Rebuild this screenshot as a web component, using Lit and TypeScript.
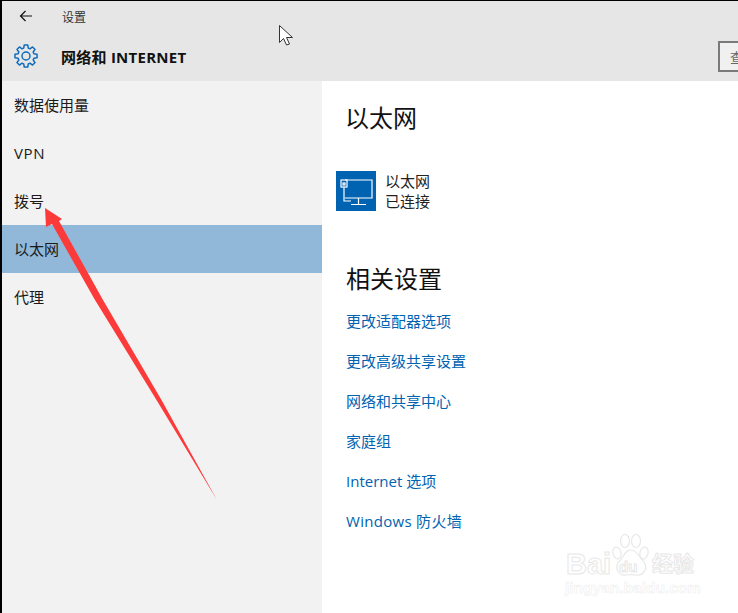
import { LitElement, html, css, svg } from "lit";
import { customElement } from "lit/decorators.js";

function gearPath(cx: number, cy: number, rOut: number, rIn: number, teeth: number) {
  const pts: string[] = [];
  const step = (Math.PI * 2) / teeth;
  for (let i = 0; i < teeth; i++) {
    const a = i * step - Math.PI / 2;
    const corners: Array<[number, number]> = [
      [rIn, a - step * 0.36],
      [rOut, a - step * 0.2],
      [rOut, a + step * 0.2],
      [rIn, a + step * 0.36],
    ];
    for (const [r, t] of corners) {
      pts.push(`${(cx + r * Math.cos(t)).toFixed(2)} ${(cy + r * Math.sin(t)).toFixed(2)}`);
    }
  }
  return "M" + pts.join("L") + "Z";
}

@customElement("app-root")
export class AppRoot extends LitElement {
  static styles = css`
    :host { display: block; width: 738px; height: 613px; position: relative; overflow: hidden; background: #fff; font-family: "Open Sans", "Noto Sans CJK SC", sans-serif; color: #111; }
    .frame { width: 738px; height: 613px; box-sizing: border-box; border-top: 1px solid #000; border-left: 2px solid #000; display: flex; flex-direction: column; }
    .header { height: 80px; background: #e6e6e6; flex: none; display: flex; flex-direction: column; position: relative; }
    .top { height: 31px; display: flex; align-items: center; padding-left: 16px; gap: 28px; }
    .top span { font-size: 12px; color: #333; padding-top: 1px; }
    .title { display: flex; align-items: center; padding-left: 12px; gap: 23px; height: 50px; }
    .title span { font-size: 15px; font-weight: 700; color: #111; letter-spacing: 0.25px; }
    .search { position: absolute; left: 716px; top: 40px; width: 30px; height: 31px; box-sizing: border-box; border: 2px solid #7a7a7a; background: #f0f0f0; font-size: 13px; color: #666; padding: 4px 0 0 10px; line-height: 20px; }
    .body { display: flex; flex: 1; min-height: 0; }
    .side { width: 320px; background: #f2f2f2; flex: none; }
    .side div { height: 48px; box-sizing: border-box; display: flex; align-items: center; padding: 0 0 2px 12px; font-size: 15px; color: #1a1a1a; }
    .side div.latin { padding-bottom: 0; letter-spacing: 0.6px; }
    .side div.sel { background: #91b8d8; }
    .main { flex: 1; padding-left: 24px; }
    h1, h2 { margin: 0; font-weight: 400; font-size: 24px; line-height: 32px; color: #111; }
    h1 { margin: 21px 0 0 -1px; }
    .conn { display: flex; gap: 9px; margin: 37px 0 0 -10px; align-items: center; }
    .tile { width: 40px; height: 40px; background: #0063b1; flex: none; display: block; }
    .conn div { font-size: 15px; line-height: 20px; color: #222; }
    h2 { margin-top: 52px; }
    .links { margin-top: 5px; display: flex; flex-direction: column; }
    .links a { height: 40px; display: flex; align-items: center; font-size: 15px; color: #0063b1; text-decoration: none; }
    .links a.wide { letter-spacing: 0.3px; }
    .overlay { position: absolute; left: 0; top: 0; pointer-events: none; }
    .mark { position: absolute; left: 565px; top: 533px; width: 173px; height: 62px; pointer-events: none; }
    .mark span { position: absolute; white-space: nowrap; line-height: 1; color: transparent; -webkit-text-stroke: 1px #e8e8e8; }
    .bai { left: 1px; top: 17px; font: 700 29px "Liberation Sans", sans-serif; }
    .du { left: 54px; top: 26px; font: 700 15px "Liberation Sans", sans-serif; }
    .jing { left: 87px; top: 20px; font-size: 21px; font-weight: 700; }
    .mark span.url { left: 0; top: 46px; font: 700 15.5px "Liberation Sans", sans-serif; -webkit-text-stroke: .6px #efefef; }
    .mark svg { position: absolute; left: 46px; top: 0; }
  `;

  render() {
    const nav = ["数据使用量", "VPN", "拨号", "以太网", "代理"];
    const links = ["更改适配器选项", "更改高级共享设置", "网络和共享中心", "家庭组", "Internet 选项", "Windows 防火墙"];
    return html`
      <div class="frame">
        <div class="header">
          <div class="top">
            <svg width="16" height="16" viewBox="0 0 16 16" fill="none" stroke="#111" stroke-width="1.2">
              <path d="M14 8H2.5M7.5 3 2.5 8l5 5" />
            </svg>
            <span>设置</span>
          </div>
          <div class="title">
            <svg width="24" height="24" viewBox="0 0 24 24" fill="none" stroke="#0f6cbd" stroke-width="1.5" stroke-linejoin="round">
              <path d=${gearPath(12, 12, 11.2, 8.2, 8)} />
              <circle cx="12" cy="12" r="4" />
            </svg>
            <span>网络和 INTERNET</span>
          </div>
          <div class="search">查</div>
        </div>
        <div class="body">
          <div class="side">
            ${nav.map((n, i) => html`<div class="${i === 3 ? "sel" : ""} ${i === 1 ? "latin" : ""}">${n}</div>`)}
          </div>
          <div class="main">
            <h1>以太网</h1>
            <div class="conn">
              <svg class="tile" viewBox="0 0 40 40" fill="none" stroke="#fff" stroke-width="1.2">
                <path d="M9 9H36V27H9" />
                <path d="M22.5 27v6M15 33.5H30" />
                <rect x="5" y="9" width="6" height="7" />
                <rect x="7" y="12" width="2" height="2" />
                <path d="M8 16V30H15" />
              </svg>
              <div>以太网<br />已连接</div>
            </div>
            <h2>相关设置</h2>
            <div class="links">${links.map((l, i) => html`<a class=${i === 5 ? "wide" : ""}>${l}</a>`)}</div>
          </div>
        </div>
      </div>
      <svg class="overlay" width="738" height="613">
        ${svg`<polygon points="45,208 62,219 59,221 103,300 161.5,400 217,500 156.5,400 95,300 52,224 46,227" fill="#fd3a3a" />`}
        ${svg`<path d="M279.5 25.5v17l4-4 3 6.5 3-1-3-6.5h6z" fill="#fff" stroke="#333" stroke-width="1" />`}
      </svg>
      <div class="mark">
        <svg width="40" height="46" viewBox="0 0 40 46" fill="none" stroke="#e8e8e8" stroke-width="1.2">
          <ellipse cx="6" cy="20" rx="4" ry="6" transform="rotate(-15 6 20)" />
          <ellipse cx="14" cy="8" rx="4.5" ry="6.5" />
          <ellipse cx="25" cy="8" rx="4.5" ry="6.5" />
          <ellipse cx="33" cy="20" rx="4" ry="6" transform="rotate(15 33 20)" />
          <path d="M20 17c6 0 8 7 13 12 4 6 0 14-8 13-3-.5-7-.5-10 0-8 1-11-7-8-12 5-4 6-13 13-13z" />
        </svg>
        <span class="bai">Bai</span>
        <span class="du">du</span>
        <span class="jing">经验</span>
        <span class="url">jingyan.baidu.com</span>
      </div>
    `;
  }
}
